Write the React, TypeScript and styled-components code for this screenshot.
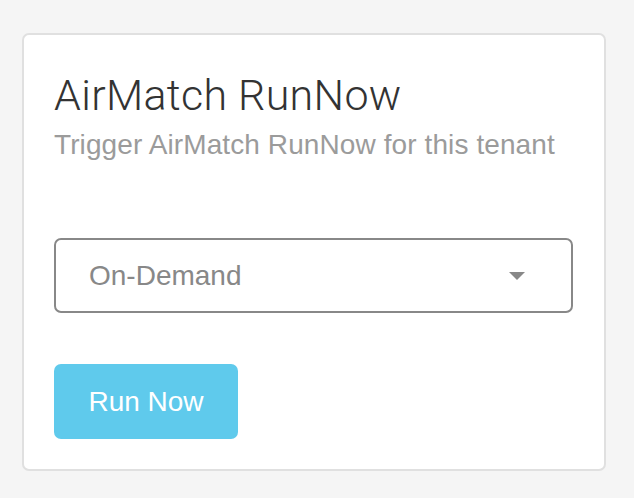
import styled, { createGlobalStyle } from 'styled-components'

const GlobalStyle = createGlobalStyle`
  html, body {
    margin: 0;
    padding: 0;
    background: #f5f5f5;
  }
  body {
    font-family: "Liberation Sans", Arial, sans-serif;
  }
`

const Page = styled.div`
  width: 634px;
  height: 498px;
  padding: 33px 0 0 22px;
  box-sizing: border-box;
`

const Card = styled.section`
  width: 584px;
  box-sizing: border-box;
  background: #fff;
  border: 2px solid #e0e0e0;
  border-radius: 7px;
  padding: 35px 30px 30px;
  display: flex;
  flex-direction: column;
  align-items: flex-start;
`

const Title = styled.h1`
  margin: 0;
  font-family: Roboto, "Liberation Sans", sans-serif;
  font-weight: 300;
  font-size: 43px;
  line-height: 50px;
  letter-spacing: 0.3px;
  color: #333;
`

const Subtitle = styled.p`
  margin: 8px 0 0;
  font-size: 28px;
  line-height: 34px;
  letter-spacing: 0.1px;
  color: #9b9b9b;
`

const Select = styled.div`
  margin-top: 76px;
  width: 519px;
  height: 75px;
  box-sizing: border-box;
  border: 2px solid #888;
  border-radius: 7px;
  padding: 0 46px 0 33px;
  display: flex;
  align-items: center;
  justify-content: space-between;
  font-size: 28px;
  color: #888;
`

const Caret = styled.span`
  width: 0;
  height: 0;
  border-left: 8px solid transparent;
  border-right: 8px solid transparent;
  border-top: 8px solid #888;
`

const Button = styled.button`
  margin-top: 51px;
  width: 184px;
  height: 75px;
  border: none;
  border-radius: 7px;
  background: #5fcaec;
  color: #fff;
  font-family: "Liberation Sans", Arial, sans-serif;
  font-size: 28px;
  padding: 0;
  cursor: pointer;
`

const App = () => {
  return (
    <>
      <GlobalStyle />
      <Page>
        <Card>
          <Title>AirMatch RunNow</Title>
          <Subtitle>Trigger AirMatch RunNow for this tenant</Subtitle>
          <Select>
            <span>On-Demand</span>
            <Caret />
          </Select>
          <Button>Run Now</Button>
        </Card>
      </Page>
    </>
  )
}

export default App
